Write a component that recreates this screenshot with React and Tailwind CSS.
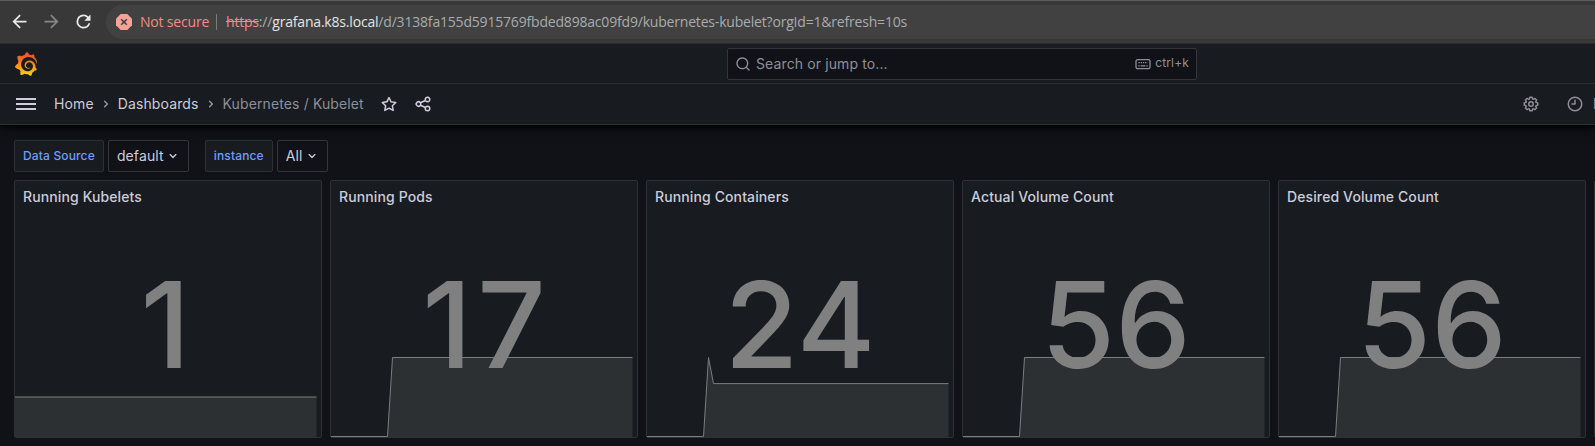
import React from "react";
import { SiGrafana } from "react-icons/si";

const paths = {
  star: "M22,9.67A1,1,0,0,0,21.14,9l-5.69-.83L12.9,3a1,1,0,0,0-1.8,0L8.55,8.16,2.86,9a1,1,0,0,0-.81.68,1,1,0,0,0,.25,1l4.13,4-1,5.68A1,1,0,0,0,6.9,21.44L12,18.77l5.1,2.67a.93.93,0,0,0,.46.12,1,1,0,0,0,.59-.19,1,1,0,0,0,.4-1l-1-5.68,4.13-4A1,1,0,0,0,22,9.67Zm-6.15,4a1,1,0,0,0-.29.88l.72,4.2-3.76-2a1.06,1.06,0,0,0-.94,0l-3.76,2,.72-4.2a1,1,0,0,0-.29-.88l-3-3,4.21-.61a1,1,0,0,0,.76-.55L12,5.7l1.88,3.82a1,1,0,0,0,.76.55l4.21.61Z",
  share: "M18,14a4,4,0,0,0-3.08,1.48l-5.1-2.35a3.64,3.64,0,0,0,0-2.26l5.1-2.35A4,4,0,1,0,14,6a4.17,4.17,0,0,0,.07.71L8.79,9.14a4,4,0,1,0,0,5.72l5.28,2.43A4.17,4.17,0,0,0,14,18a4,4,0,1,0,4-4ZM18,4a2,2,0,1,1-2,2A2,2,0,0,1,18,4ZM6,14a2,2,0,1,1,2-2A2,2,0,0,1,6,14Zm12,6a2,2,0,1,1,2-2A2,2,0,0,1,18,20Z",
  clock: "M12,6a1,1,0,0,0-1,1v4H8a1,1,0,0,0,0,2h4a1,1,0,0,0,1-1V7A1,1,0,0,0,12,6Zm0-4A10,10,0,1,0,22,12,10,10,0,0,0,12,2Zm0,18a8,8,0,1,1,8-8A8,8,0,0,1,12,20Z",
  search: "M21.71,20.29,18,16.61A9,9,0,1,0,16.61,18l3.68,3.68a1,1,0,0,0,1.42,0A1,1,0,0,0,21.71,20.29ZM11,18a7,7,0,1,1,7-7A7,7,0,0,1,11,18Z",
  cog: "M21.32,9.55l-1.89-.63.89-1.78A1,1,0,0,0,20.13,6L18,3.87a1,1,0,0,0-1.15-.19l-1.78.89-.63-1.89A1,1,0,0,0,13.5,2h-3a1,1,0,0,0-.95.68L8.92,4.57,7.14,3.68A1,1,0,0,0,6,3.87L3.87,6a1,1,0,0,0-.19,1.15l.89,1.78-1.89.63A1,1,0,0,0,2,10.5v3a1,1,0,0,0,.68.95l1.89.63-.89,1.78A1,1,0,0,0,3.87,18L6,20.13a1,1,0,0,0,1.15.19l1.78-.89.63,1.89a1,1,0,0,0,.95.68h3a1,1,0,0,0,.95-.68l.63-1.89,1.78.89A1,1,0,0,0,18,20.13L20.13,18a1,1,0,0,0,.19-1.15l-.89-1.78,1.89-.63A1,1,0,0,0,22,13.5v-3A1,1,0,0,0,21.32,9.55ZM20,12.78l-1.2.4A2,2,0,0,0,17.64,16l.57,1.14-1.1,1.1L16,17.64a2,2,0,0,0-2.79,1.16l-.4,1.2H11.22l-.4-1.2A2,2,0,0,0,8,17.64l-1.14.57-1.1-1.1L6.36,16A2,2,0,0,0,5.2,13.18L4,12.78V11.22l1.2-.4A2,2,0,0,0,6.36,8L5.79,6.89l1.1-1.1L8,6.36A2,2,0,0,0,10.82,5.2l.4-1.2h1.56l.4,1.2A2,2,0,0,0,16,6.36l1.14-.57,1.1,1.1L17.64,8a2,2,0,0,0,1.16,2.79l1.2.4ZM12,8a4,4,0,1,0,4,4A4,4,0,0,0,12,8Zm0,6a2,2,0,1,1,2-2A2,2,0,0,1,12,14Z",
  down: "M17,9.17a1,1,0,0,0-1.41,0L12,12.71,8.46,9.17a1,1,0,0,0-1.41,0,1,1,0,0,0,0,1.42l4.24,4.24a1,1,0,0,0,1.42,0L17,10.59A1,1,0,0,0,17,9.17Z",
  right: "M14.83,11.29,10.59,7.05a1,1,0,0,0-1.42,0,1,1,0,0,0,0,1.41L12.71,12,9.17,15.54a1,1,0,0,0,0,1.41,1,1,0,0,0,.71.29,1,1,0,0,0,.71-.29l4.24-4.24A1,1,0,0,0,14.83,11.29Z",
  back: "M20 11H7.83l5.59-5.59L12 4l-8 8 8 8 1.41-1.41L7.83 13H20v-2z",
  forward: "M12 4l-1.41 1.41L16.17 11H4v2h12.17l-5.58 5.59L12 20l8-8z",
  reload: "M17.65 6.35A7.958 7.958 0 0 0 12 4a8 8 0 1 0 7.73 10h-2.08A5.99 5.99 0 0 1 12 18a6 6 0 1 1 0-12c1.66 0 3.14.69 4.22 1.78L13 11h7V4l-2.35 2.35z",
};

function Icon({ name, className }) {
  return (
    <svg viewBox="0 0 24 24" fill="currentColor" className={`shrink-0 ${className}`}>
      <path d={paths[name]} />
    </svg>
  );
}

function Keyboard() {
  return (
    <svg viewBox="0 0 16 16" className="size-4 shrink-0" fill="none" stroke="currentColor">
      <rect x="1" y="3.7" width="14" height="9" rx="1.6" strokeWidth="1.3" />
      <path d="M3.5 6.7h9" strokeWidth="1.3" strokeDasharray="1.3 0.9" />
      <path d="M3.3 9.8h1.4M5.6 9.8h4.8M11.3 9.8h1.4" strokeWidth="1.3" />
    </svg>
  );
}

function AddressBar() {
  return (
    <div className="relative z-20 flex h-11 shrink-0 items-center border-t border-b border-t-[#5c5e5d] border-b-[#2c2c2c] bg-[#383838] pb-px pl-[9px] font-['Open_Sans',sans-serif]">
      <Icon name="back" className="size-[21px] text-[#e8e8e8]" />
      <Icon name="forward" className="ml-[11px] size-[21px] text-[#868686]" />
      <Icon name="reload" className="ml-[11px] size-[21px] text-[#e8e8e8]" />
      <div className="ml-3 flex h-[34px] grow items-center rounded-l-full bg-[#414141] pl-[10px] text-[14px] tracking-[-0.19px] whitespace-nowrap">
        <svg viewBox="0 0 16 16" className="size-4 shrink-0">
          <path d="M4.7 0h6.6L16 4.7v6.6L11.3 16H4.7L0 11.3V4.7z" fill="#f6a29b" />
          <path d="M5.2 5.2l5.6 5.6M10.8 5.2l-5.6 5.6" stroke="#414141" strokeWidth="1.6" />
        </svg>
        <span className="ml-2 w-[68px] text-[#f28b82]">Not secure</span>
        <span className="ml-2 h-4 w-px bg-[#7a7a7a]" />
        <span className="ml-[9px] text-[#a9abad]">
          <span className="text-[#f28b82] line-through">https</span>://
          <span className="text-[#e4e4e4]">grafana.k8s.local</span>
          /d/3138fa155d5915769fbded898ac09fd9/kubernetes-kubelet?orgId=1&amp;refresh=10s
        </span>
      </div>
    </div>
  );
}

function TopBar() {
  return (
    <div className="grid h-10 shrink-0 grid-cols-[713px_470px_1fr] items-center border-b border-[#2e3033] pl-[14px]">
      <svg width="0" height="0" className="absolute">
        <linearGradient id="flame" x1="0" y1="0" x2="0" y2="1">
          <stop offset="0.15" stopColor="#f05a28" />
          <stop offset="0.95" stopColor="#fbca0a" />
        </linearGradient>
      </svg>
      <SiGrafana className="size-6" style={{ fill: "url(#flame)" }} />
      <div className="flex h-8 items-center rounded-[2px] border border-[#35363b] bg-[#111217] pr-[7px] pl-[7px] text-[#8e8e99]">
        <Icon name="search" className="size-4" />
        <span className="ml-[5px] grow text-[14px] tracking-[0.12px]">Search or jump to...</span>
        <Keyboard />
        <span className="ml-1 pb-[2px] text-[12px] tracking-[0.15px]">ctrl+k</span>
      </div>
    </div>
  );
}

function Breadcrumbs() {
  return (
    <div className="flex h-[41px] shrink-0 items-center overflow-hidden border-b border-[#2e3033] pl-4 text-[14px] tracking-[0.12px] whitespace-nowrap text-[#ccccdc]">
      <div className="flex w-5 flex-col gap-[3px]">
        <span className="h-0.5 bg-current" />
        <span className="h-0.5 bg-current" />
        <span className="h-0.5 bg-current" />
      </div>
      <span className="ml-[18px] pb-[2px]">Home</span>
      <Icon name="right" className="mx-1 size-4 text-[#9a9aa6]" />
      <span className="pb-[2px]">Dashboards</span>
      <Icon name="right" className="mx-1 size-4 text-[#9a9aa6]" />
      <span className="pb-[2px] text-[#8e8e99]">Kubernetes / Kubelet</span>
      <Icon name="star" className="ml-4 size-[18px]" />
      <Icon name="share" className="ml-4 size-[18px]" />
      <span className="grow" />
      <Icon name="cog" className="mr-[26px] size-[18px] text-[#8e8e99]" />
      <Icon name="clock" className="mr-[9px] size-[18px] text-[#8e8e99]" />
      <span className="w-0.5 pb-[2px] font-medium text-[#8e8e99]">L</span>
    </div>
  );
}

function Variable({ label, value }) {
  return (
    <div className="flex gap-1">
      <div className="flex h-8 items-center rounded-[2px] border border-[#2e3033] bg-[#181b1f] px-2 text-[12px] font-medium tracking-[0.15px] text-[#6e9fff]">
        {label}
      </div>
      <div className="flex h-8 items-center rounded-[2px] border border-[#35363b] pr-[7px] pl-2 text-[14px] tracking-[0.12px] text-[#ccccdc]">
        <span className="pb-[2px]">{value}</span>
        <Icon name="down" className="ml-px size-4" />
      </div>
    </div>
  );
}

const step = [[0, 79.5], [56.5, 79.5], [61.5, 0.5], [301.5, 0.5]];
const panels = [
  { title: "Running Kubelets", value: "1", line: [[0, 40], [301.5, 40]] },
  { title: "Running Pods", value: "17", line: step },
  { title: "Running Containers", value: "24", line: [[0, 79.5], [56.5, 79.5], [61.5, 0.5], [66.5, 26.6], [301.5, 26.6]] },
  { title: "Actual Volume Count", value: "56", line: step },
  { title: "Desired Volume Count", value: "56", line: step },
];

function Sparkline({ line }) {
  const pts = line.map((p) => p.join(",")).join(" ");
  return (
    <svg viewBox="0 0 306 80" className="block h-20 w-[306px]">
      <polygon points={`0,80 ${pts} 301.5,80`} fill="#2d3033" />
      <polyline points={pts} fill="none" stroke="#7c7d7e" strokeWidth="1" />
    </svg>
  );
}

function StatPanel({ title, value, line }) {
  return (
    <div className="flex h-[258px] w-[308px] shrink-0 flex-col rounded-[2px] border border-[#2e3033] bg-[#181b1f]">
      <h2 className="h-8 px-2 text-[14px] leading-8 font-medium tracking-[0.12px] text-[#ccccdc]">{title}</h2>
      <div className="grid grow grid-cols-1 grid-rows-1">
        <div className="col-start-1 row-start-1 self-end">
          <Sparkline line={line} />
        </div>
        <div className="z-10 col-start-1 row-start-1 self-center text-center text-[120px] leading-none font-medium text-[#808080]">
          {[...value].map((digit, i) => (
            <span key={i} className={digit === "1" ? "tracking-[5px]" : ""}>
              {digit}
            </span>
          ))}
        </div>
      </div>
    </div>
  );
}

export default function App() {
  return (
    <div className="flex h-[446px] w-[1595px] flex-col overflow-hidden bg-[#111217] font-['Inter',sans-serif]">
      <AddressBar />
      <div className="z-10 flex shrink-0 flex-col bg-[#181b1f] shadow-[0_1px_2px_#000,0_2px_12px_#000]">
        <TopBar />
        <Breadcrumbs />
      </div>
      <div className="flex gap-4 px-[14px] pt-[15px] pb-2">
        <Variable label="Data Source" value="default" />
        <Variable label="instance" value="All" />
      </div>
      <div className="flex gap-2 pl-[14px]">
        {panels.map((p) => (
          <StatPanel key={p.title} {...p} />
        ))}
        <div className="h-[258px] w-4 shrink-0 rounded-[2px] border border-[#2e3033] bg-[#181b1f]" />
      </div>
    </div>
  );
}
